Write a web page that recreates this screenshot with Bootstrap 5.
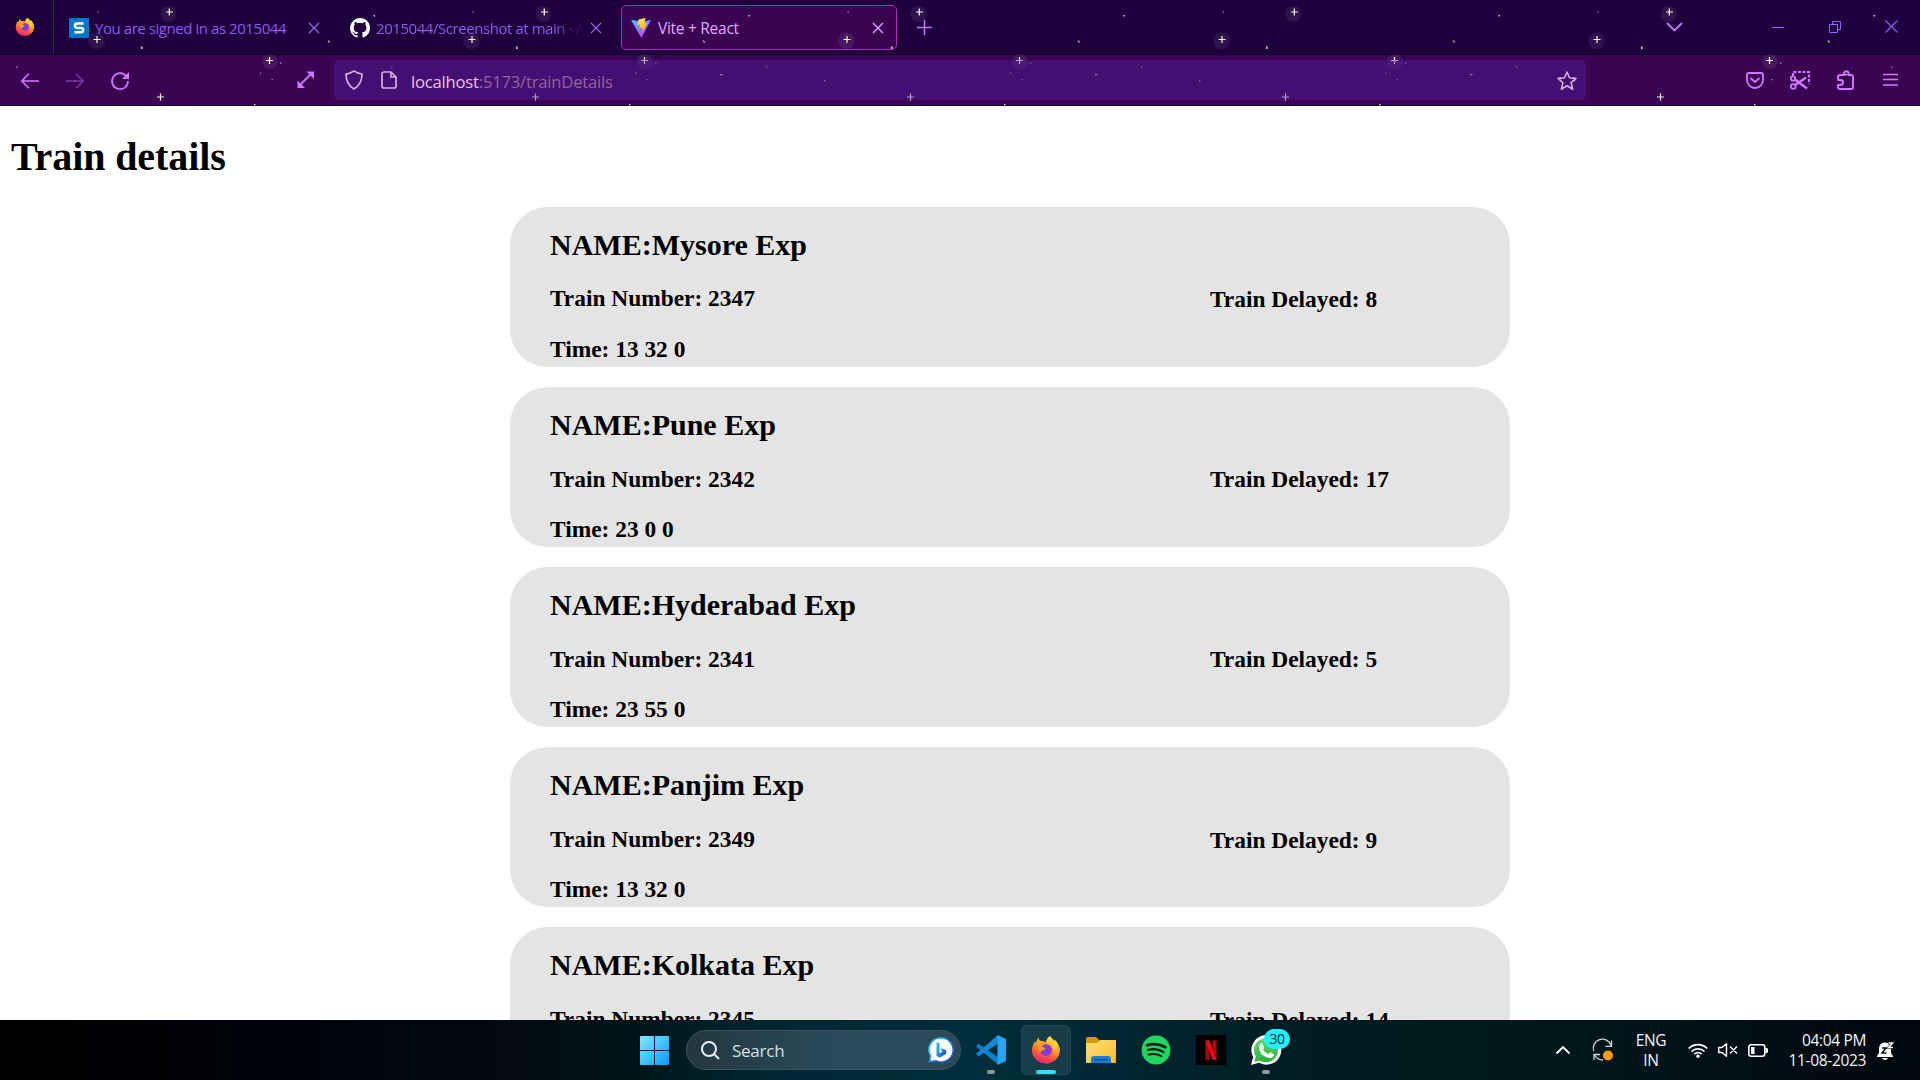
<!DOCTYPE html>
<html lang="en">
<head>
<meta charset="utf-8">
<title>Vite + React</title>
<link href="https://cdn.jsdelivr.net/npm/bootstrap@5.3.0/dist/css/bootstrap.min.css" rel="stylesheet">
<script src="https://cdn.jsdelivr.net/npm/bootstrap@5.3.0/dist/js/bootstrap.bundle.min.js"></script>
<style>
body{width:1920px;height:1080px;overflow:hidden;background:#fff;color:#000;font-family:"Open Sans","Noto Sans",sans-serif;font-size:15px}
svg{display:block;flex:none;overflow:visible}
.chrome{height:106px;background:linear-gradient(#1e003f 0 54px,#10001f 54px 55px,#3a0452 55px 105px,#10001f 105px)}
.starfield{position:absolute;inset:0;pointer-events:none}
.tabstrip{height:55px;position:relative}
.tabs-row{padding-top:5px}
.pinned{width:54px;height:54px;border-right:1px solid #3d1d70;padding-left:15px}
.tabitem{height:44px;line-height:44px;color:#8f5ae8;white-space:nowrap}
.tabitem.one{width:281px;padding:1px 12px 0 15px}
.tabitem.two{width:277px;padding:1px 7px 0 15px}
.tabitem.current{width:276px;height:45px;margin-left:9px;border:1px solid #c121b4;border-radius:5px;color:#dfa9ff;padding:0 13px 0 9px}
.tabtext{font-size:15px;letter-spacing:-.44px;margin-left:6px}
.current .tabtext{font-size:15.5px;letter-spacing:-.28px;margin-left:7px}
.fade-end{width:208px;overflow:hidden;-webkit-mask-image:linear-gradient(90deg,#000 85%,transparent)}
.toolbar{height:50px;position:relative;color:#d178ff}
.urlbar{width:1252px;height:40px;background:rgba(84,28,160,.42);border-radius:5px;color:#dcaee0}
.urltext{font-size:16.7px;letter-spacing:-.24px;color:#e9c4ee;margin-left:14px;padding-top:4px}
.urltext span{color:#94649f}
.page{height:914px;overflow:hidden;font-family:"Liberation Serif",serif;padding:28px 0 0 11px}
.page h1,.page h2,.page h3{font-weight:700;margin:0}
.page h1{font-size:40px;line-height:46px;letter-spacing:-.1px}
.trains{margin:27px 399px 0 499px;gap:20px}
.train{width:1000px;height:160px;flex:none;border-radius:37.5px;background:#e4e4e4;padding:21px 40px 0}
.train h2{font-size:30px;line-height:34px}
.train h3{font-size:23.4px;line-height:27px}
.train .num{margin-top:24px}
.train .when{margin-top:23px}
.train:first-child .num{margin-top:23px}
.train:first-child .when{margin-top:24px}
.delay{width:260px;padding-top:58px}
.train:nth-child(n+4) .delay{padding-top:59px}
.taskbar{height:60px;background:linear-gradient(90deg,#000 0,#000106 8%,#00030c 16%,#000b12 27%,#001519 33%,#002631 40%,#002e3c 50%,#002732 58%,#001d23 66%,#001a1e 74%,#00171b 83%,#000e15 91%,#00070c 100%);color:#f3f6f7;position:relative}
.searchpill{width:275px;height:40px;margin:0 15px 0 17px;border-radius:20px;border:1px solid #3d5560;background:linear-gradient(90deg,#233740,#284a57 50%,#2b4b58);padding:0 6px 0 14px}
.searchpill span{font-size:17px;letter-spacing:-.25px;margin-left:12px;padding-top:1px;color:#d7e0e3}
.app{width:50px;height:50px;border-radius:6px;margin-right:5px;position:relative}
.app.first{margin-left:-10px}
.app.active{background:rgba(255,255,255,.09);box-shadow:inset 0 0 0 1px rgba(255,255,255,.06)}
.app::after{content:"";position:absolute;left:50%;bottom:1px;height:4px;border-radius:2px}
.app.open::after{width:8px;margin-left:-4px;background:#8c9ba1}
.app.active::after{width:20px;margin-left:-10px;background:#26e4fb}
.count{position:absolute;left:23px;top:4px;width:26px;height:20px;border-radius:10px;background:#22f0fb;color:#06303a;font-size:14px;line-height:20px;text-align:center;letter-spacing:-.4px}
.tray{font-size:15.5px;line-height:20px;letter-spacing:-.34px;padding-right:26px}
.lang{width:32px;margin-right:21px}
.clock{width:80px;white-space:nowrap;margin-right:11px}
</style>
</head>
<body>
<svg width="0" height="0" class="position-absolute">
<defs>
<linearGradient id="fx" x1=".7" y1="0" x2=".3" y2="1"><stop offset="0" stop-color="#fff04a"/><stop offset=".35" stop-color="#ffb02b"/><stop offset=".62" stop-color="#ff6a32"/><stop offset="1" stop-color="#f3187a"/></linearGradient>
<radialGradient id="fxc"><stop offset="0" stop-color="#6d3df0"/><stop offset=".7" stop-color="#8b39d0"/><stop offset="1" stop-color="#b23ac0"/></radialGradient>
<linearGradient id="win" x1="0" y1="0" x2="1" y2="1"><stop offset="0" stop-color="#8be4ff"/><stop offset=".5" stop-color="#42c5ff"/><stop offset="1" stop-color="#0a97f8"/></linearGradient>
<linearGradient id="vt" x1="0" y1="0" x2=".6" y2="1"><stop offset="0" stop-color="#41d1ff"/><stop offset="1" stop-color="#bd34fe"/></linearGradient>
<linearGradient id="vy" x1="0" y1="0" x2="0" y2="1"><stop offset="0" stop-color="#ffea83"/><stop offset=".2" stop-color="#ffdd35"/><stop offset="1" stop-color="#ffa800"/></linearGradient>
<linearGradient id="fo" x1="0" y1="0" x2="1" y2="1"><stop offset="0" stop-color="#ffe07c"/><stop offset="1" stop-color="#fbbb22"/></linearGradient>
<linearGradient id="bg" x1="0" y1="0" x2="1" y2="1"><stop offset="0" stop-color="#2ec9f5"/><stop offset="1" stop-color="#1d43c8"/></linearGradient>
<linearGradient id="wa" x1="0" y1="0" x2="0" y2="1"><stop offset="0" stop-color="#62d56b"/><stop offset="1" stop-color="#2bb13f"/></linearGradient>
<symbol id="firefox" viewBox="0 0 30 30"><path fill="url(#fx)" d="M19.2 1c1.2 2 3.300 3.600 4.700 5.300.2-.6 0-1.200 0-1.700 2.700 3 5 7 5 11.200A14 13.900 0 0 1 1 16c0-4 1.300-7.500 3.300-10L4.500 8.500 7.300 2.500 8.500 5.600 13.200 6.500 15 7.200C15.200 4.500 17 2 19.200 1z"/><circle cx="15" cy="15.200" r="6.200" fill="url(#fxc)"/><path fill="#ff9b22" d="M5 8c3-2.500 7-.5 10.200-1-.2 2.500-4 3-4.400 5 1.200.7 2.800.2 4 1-1.600 2.900-4.400 1.800-5.300 4.600C7.500 14.500 8 11 5 8z"/><path fill="#ffcf35" d="M19 2c-1 4 4.600 7.800 4.400 13.800 2.500-3.300 1.800-7.600.4-9.800C22 4.500 20 3.500 19 2z"/></symbol>
<pattern id="sky" width="375" height="106" patternUnits="userSpaceOnUse">
<g fill="#fff" fill-opacity=".075"><circle cx="168.500" cy="14" r="8"/><circle cx="96.500" cy="41" r="8.200"/><circle cx="270" cy="61.500" r="7.700"/></g>
<path stroke="#fff6dc" stroke-width="1.200" d="M166 12h7M169.300 8.500v7M93.500 39.500h7M97 36v7M266 60.500h7M269.500 57v7M157 97h7M160.500 93.500v7"/>
<g fill="#d9cbb8"><path d="M141 46.500h1.600v2.600H141zM373.500 15h1.500v1.500h-1.500zM327.500 40.500h1.500l1.300 2h-1.500zM345 74h2.500v1.200H345zM254 104h1.500v1.500H254z"/></g>
<g fill="#b29aae"><path d="M97.500 11.500h1.300v1.300h-1.300zM16 66.500h1.400v1.300H16zM260 72.500h1.300v1.300h-1.300zM271.500 79h1.300v1.300h-1.300zM280 62.500h1.400v1.300H280zM74 80h1.400v1.400H74z"/></g>
</pattern>
</defs>
</svg>

<header class="chrome position-relative">
<svg class="starfield" width="1920" height="106"><rect x="621.500" y="5.500" width="275" height="44" rx="5" fill="#3a0452"/><rect width="1920" height="106" fill="url(#sky)"/></svg>
<div class="tabstrip d-flex align-items-start">
<div class="pinned d-flex align-items-center"><svg width="20" height="20"><use href="#firefox"/></svg></div>
<div class="tabs-row d-flex">
<div class="tabitem one d-flex align-items-center"><svg width="20" height="20"><rect width="20" height="20" fill="#0078c8"/><path d="M14.500 5.500H8.200Q6 5.500 6 7.600T8.200 9.900h3.800q2.200 0 2.200 2.200t-2.200 2.200H5.500" fill="none" stroke="#fff" stroke-width="2.500"/></svg><span class="tabtext">You are signed in as 2015044</span>
<svg class="ms-auto me-1" width="10" height="10" stroke="#9a63f2" stroke-width="1.200"><path d="M0 0l10 10M10 0L0 10"/></svg></div>
<div class="tabitem two d-flex align-items-center"><svg width="20" height="20" viewBox="0 0 16 16" fill="#fff"><path d="M8 0a8 8 0 0 0-2.530 15.590c.4.070.55-.17.55-.38v-1.490c-2.010.37-2.530-.49-2.690-.94-.09-.23-.48-.94-.82-1.130-.28-.15-.68-.52-.01-.53.63-.01 1.080.58 1.230.82.720 1.210 1.870.87 2.330.66.070-.52.280-.87.510-1.070-1.780-.2-3.640-.89-3.640-3.950 0-.87.310-1.590.82-2.150-.08-.2-.36-1.020.08-2.120 0 0 .67-.21 2.200.82a7.600 7.600 0 0 1 4 0c1.530-1.040 2.200-.82 2.200-.82.440 1.100.16 1.920.08 2.120.51.560.82 1.270.82 2.150 0 3.070-1.870 3.750-3.650 3.950.29.250.54.730.54 1.480v2.200c0 .21.150.46.550.38A8 8 0 0 0 8 0z"/></svg><span class="tabtext fade-end">2015044/Screenshot at main · A</span>
<svg class="ms-auto me-1" width="10" height="10" stroke="#9a63f2" stroke-width="1.200"><path d="M0 0l10 10M10 0L0 10"/></svg></div>
<div class="tabitem current d-flex align-items-center"><svg width="20" height="20"><path fill="url(#vt)" d="M0 2l10.300 18L20 2l-9 1.500z"/><path fill="url(#vy)" d="M7.500 1.500L14.500 0l-1.300 5.500 3-.5-5 10 .5-5.200-3.200.5L9 7 6.500 7.200z"/></svg><span class="tabtext">Vite + React</span>
<svg class="ms-auto" width="10" height="10" stroke="#e5a9ff" stroke-width="1.300"><path d="M0 0l10 10M10 0L0 10"/></svg></div>
</div>
<svg style="margin:20px 0 0 20px" width="15" height="15" stroke="#c87aff" stroke-width="1.500"><path d="M0 7.500h15M7.500 0v15"/></svg>
<div class="ms-auto d-flex align-items-center" style="height:53px;padding-right:22px">
<svg width="15" height="8" fill="none" stroke="#c87aff" stroke-width="1.800" style="margin-right:90px"><path d="M0 0l7.500 7.500L15 0"/></svg>
<svg width="12" height="12" stroke="#9560f5" style="margin-right:45px"><path d="M0 6.500h12"/></svg>
<svg width="12" height="12" fill="none" stroke="#9560f5" style="margin-right:44px"><path d="M.5 3.500h8v8h-8zM3.500 3.500v-3h8v8h-3"/></svg>
<svg width="13" height="13" stroke="#9560f5" stroke-width="1.100"><path d="M.5.5l12 12M12.500.5l-12 12"/></svg>
</div>
</div>
<div class="toolbar d-flex align-items-center">
<svg width="18" height="16" fill="none" stroke="currentColor" stroke-width="1.600" style="margin-left:21px;margin-top:1px"><path d="M18 8H1M8 .8L.8 8 8 15.200"/></svg>
<svg width="18" height="16" fill="none" stroke="#7d359d" stroke-width="1.600" style="margin-left:27px;margin-top:1px"><path d="M0 8h17M10 .8L17.200 8 10 15.200"/></svg>
<svg width="18" height="18" fill="none" stroke="currentColor" stroke-width="1.700" style="margin-left:27px;margin-top:2px"><path d="M15.500 4.500A8 8 0 1 0 17 9"/><path fill="currentColor" stroke="none" d="M18 0v7h-7z"/></svg>
<svg width="18" height="18" stroke="currentColor" stroke-width="1.800" style="margin-left:168px"><path d="M3 14L14 3"/><path fill="currentColor" stroke="none" d="M9.500.500H17V8zM.500 9.500V17H8z"/></svg>
<div class="urlbar d-flex align-items-center" style="margin-left:19px">
<svg width="18" height="20" fill="none" stroke="currentColor" stroke-width="1.700" style="margin-left:11px"><path d="M9 1q4 2.500 8 3c0 7-2.200 11.500-8 15C3.200 15.500 1 11 1 4q4-.5 8-3z" stroke-linejoin="round"/></svg>
<svg width="16" height="18" fill="none" stroke="currentColor" stroke-width="1.700" style="margin-left:18px"><path d="M10 1H3Q1 1 1 3v12q0 2 2 2h10q2 0 2-2V6zv5h5" stroke-linejoin="round"/></svg>
<div class="urltext">localhost<span>:5173/trainDetails</span></div>
<svg class="ms-auto" width="20" height="19" fill="none" stroke="currentColor" stroke-width="1.600" style="margin-right:9px"><path stroke-linejoin="round" d="M10 1l2.500 5.800 6.500.600-4.900 4.200 1.500 6.600L10 14.700l-5.600 3.500 1.500-6.600L1 7.400l6.500-.6z"/></svg>
</div>
<div class="ms-auto d-flex align-items-center" style="padding-right:22px">
<svg width="18" height="17" fill="none" stroke="currentColor" stroke-width="1.800" style="margin-right:26px"><path d="M1 3Q1 1 3 1h12q2 0 2 2v5a8 8 0 0 1-16 0zM4.500 6L9 10l4.500-4"/></svg>
<svg width="20" height="20" fill="none" stroke="currentColor" stroke-width="1.800" style="margin-right:27px"><path stroke-width="2.200" stroke-dasharray="3 1.500" d="M3 6V2h16v12"/><circle cx="3" cy="8.500" r="2.200"/><circle cx="3.200" cy="16.500" r="2.400"/><path stroke-width="2.400" d="M5 9.500l12 9M5 15l11-7.500"/></svg>
<svg width="18" height="20" fill="none" stroke="currentColor" stroke-width="1.900" style="margin-right:28px"><path stroke-linejoin="round" d="M1 9V7q0-2 2-2h4V3.500a2.300 2.300 0 0 1 4.600 0V5H14q2 0 2 2v10q0 2-2 2H3q-2 0-2-2v-2h2.500a2.500 2.500 0 0 0 0-5H1z"/></svg>
<svg width="15" height="13" stroke="currentColor" stroke-width="1.300"><path d="M0 .500h15M0 5.500h15M0 11h15"/></svg>
</div>
</div>
</header>

<main class="page">
<h1>Train details</h1>
<div class="trains d-flex flex-column">
<section class="train d-flex justify-content-between"><div><h2>NAME:Mysore Exp</h2><h3 class="num">Train Number: 2347</h3><h3 class="when">Time: 13 32 0</h3></div><div class="delay"><h3>Train Delayed: 8</h3></div></section>
<section class="train d-flex justify-content-between"><div><h2>NAME:Pune Exp</h2><h3 class="num">Train Number: 2342</h3><h3 class="when">Time: 23 0 0</h3></div><div class="delay"><h3>Train Delayed: 17</h3></div></section>
<section class="train d-flex justify-content-between"><div><h2>NAME:Hyderabad Exp</h2><h3 class="num">Train Number: 2341</h3><h3 class="when">Time: 23 55 0</h3></div><div class="delay"><h3>Train Delayed: 5</h3></div></section>
<section class="train d-flex justify-content-between"><div><h2>NAME:Panjim Exp</h2><h3 class="num">Train Number: 2349</h3><h3 class="when">Time: 13 32 0</h3></div><div class="delay"><h3>Train Delayed: 9</h3></div></section>
<section class="train d-flex justify-content-between"><div><h2>NAME:Kolkata Exp</h2><h3 class="num">Train Number: 2345</h3></div><div class="delay"><h3>Train Delayed: 14</h3></div></section>
</div>
</main>

<footer class="taskbar d-flex align-items-center">
<svg width="29" height="29" fill="url(#win)" style="margin-left:640px"><path d="M0 1q0-1 1-1h13v14H0zM15 0h13q1 0 1 1v13H15zM0 15h14v14H1q-1 0-1-1zM15 15h14v13q0 1-1 1H15z"/></svg>
<div class="searchpill d-flex align-items-center">
<svg width="19" height="19" fill="none" stroke="#e8edef" stroke-width="2"><circle cx="8" cy="8" r="7"/><path d="M13 13l5 5"/></svg>
<span>Search</span>
<svg class="ms-auto" width="26" height="26"><path fill="#fff" stroke="url(#bg)" stroke-width="1.600" d="M13 1a12 12 0 1 1-5 22.800L1.500 24.500l1-5.500A12 12 0 0 1 13 1z"/><path fill="url(#bg)" d="M8.500 5l3 1.200v10.300l2.800-1.700-2-3.800 6 2.300v3.500l-6.800 4-3-2z"/></svg>
</div>
<div class="app first open d-flex align-items-center justify-content-center"><svg width="30" height="30"><path fill="#0b7fc9" d="M2.500 9L0 11.500l22 18V22z"/><path fill="#1486d2" d="M2.500 21.500L0 18.800 22 0v8.500z"/><path fill="#29a5f3" d="M21.500 0L30 4v22l-8.500 4z"/></svg></div>
<div class="app active d-flex align-items-center justify-content-center"><svg width="30" height="30"><use href="#firefox"/></svg></div>
<div class="app d-flex align-items-center justify-content-center"><svg width="30" height="27"><path fill="#d99a08" d="M0 2q0-2 2-2h8l3 3v5H0z"/><path fill="url(#fo)" d="M0 6h11l3-3h16v22q0 1-1 1H1q-1 0-1-1z"/><path fill="#1280d8" d="M5 26v-4q0-3 3-3h14q3 0 3 3v4z"/><path fill="#0a4f94" d="M8 22h14v1.500H8z"/></svg></div>
<div class="app d-flex align-items-center justify-content-center"><svg width="30" height="30"><circle cx="15" cy="15" r="14.400" fill="#1ed760"/><path fill="none" stroke="#06170d" stroke-linecap="round" d="M6 10.200q9.500-2.700 18.500 2" stroke-width="2.700"/><path fill="none" stroke="#06170d" stroke-linecap="round" d="M7 15q8-2.300 15.500 2" stroke-width="2.200"/><path fill="none" stroke="#06170d" stroke-linecap="round" d="M7.500 19.500q7-1.700 13 1.800" stroke-width="1.900"/></svg></div>
<div class="app d-flex align-items-center justify-content-center"><svg width="30" height="30"><path fill="#000" d="M0 0h30v30H0z"/><path fill="#b1060f" d="M9.500 5.500h4v19l-4 .5zM16.500 5.500h4V25l-4-.5z"/><path fill="#e90c17" d="M9.500 5.500h4l7 19.500-4-.5z"/></svg></div>
<div class="app open d-flex align-items-center justify-content-center"><svg width="30" height="30"><path fill="#fff" d="M0 30l2.200-8A15 14.800 0 1 1 8 27.800z"/><path fill="url(#wa)" d="M3.300 26.800l1.500-5.200a12 12 0 1 1 3.800 3.800z"/><path fill="#fff" d="M9.500 8.500l1.800-.3 2 4.300-1.500 2q2 3.500 5.300 4.800l2-2.100 4 2q-.5 3.800-4 3.800Q9 21.500 8 12.500q0-3 1.500-4z"/></svg><span class="count">30</span></div>
<div class="tray ms-auto d-flex align-items-center">
<svg width="14" height="8" fill="none" stroke="#fff" stroke-width="1.900" style="margin-right:23px"><path d="M.5 7.500L7 1l6.500 6.500"/></svg>
<svg width="20" height="21" fill="none" stroke="#cfd8da" stroke-width="1.300" style="margin-right:22px"><path d="M.7 11A9 9 0 0 1 18 5.500M18.500.500v5.800h-6M1 20v-5.500h6M1.500 15q3 5 8.500 5"/><circle cx="15" cy="15.500" r="5" fill="#ff9a0a" stroke="none"/></svg>
<div class="lang text-center">ENG<br>IN</div>
<svg width="20" height="15" fill="none" stroke="#fff" stroke-width="1.700" style="margin-right:10px"><path d="M.7 5.500a13.200 13.200 0 0 1 18.600 0M3.500 8.500a9.200 9.200 0 0 1 13 0M6.200 11.200a5.500 5.500 0 0 1 7.600 0"/><circle cx="10" cy="13.300" r="1.700" fill="#fff" stroke="none"/></svg>
<svg width="20" height="14" fill="none" stroke="#fff" stroke-width="1.400" style="margin-right:10px"><path stroke-linejoin="round" d="M.7 4.500H4L8.500.8v12.400L4 9.500H.7zM12 3.500l7 7M19 3.500l-7 7"/></svg>
<svg width="20" height="13" style="margin-right:18px"><rect x=".8" y=".8" width="16" height="11.400" rx="2.500" fill="none" stroke="#fff" stroke-width="1.600"/><path fill="#fff" d="M3 3h3.500v7H3zM17.500 4h1q1.500 0 1.500 1.200v2.600Q20 9 18.500 9h-1z"/></svg>
<div class="clock text-end">04:04 PM<br>11-08-2023</div>
<svg width="17" height="19"><path fill="#fff" d="M0 15l2-3V8q0-6.500 6-6.500t6 6.500v4l2 3v1H0zM5 17h6q-1 2-3 2t-3-2z"/><path d="M5 7h4l-4 5h4.500" fill="none" stroke="#00121a" stroke-width="1.500"/><path d="M11 2h4.500l-4 4.500H16" fill="none" stroke="#00121a" stroke-width="2.500"/><path d="M11.500 2h4l-4 4.500h4.500" fill="none" stroke="#fff" stroke-width="1.500"/></svg>
</div>
</footer>
</body>
</html>
